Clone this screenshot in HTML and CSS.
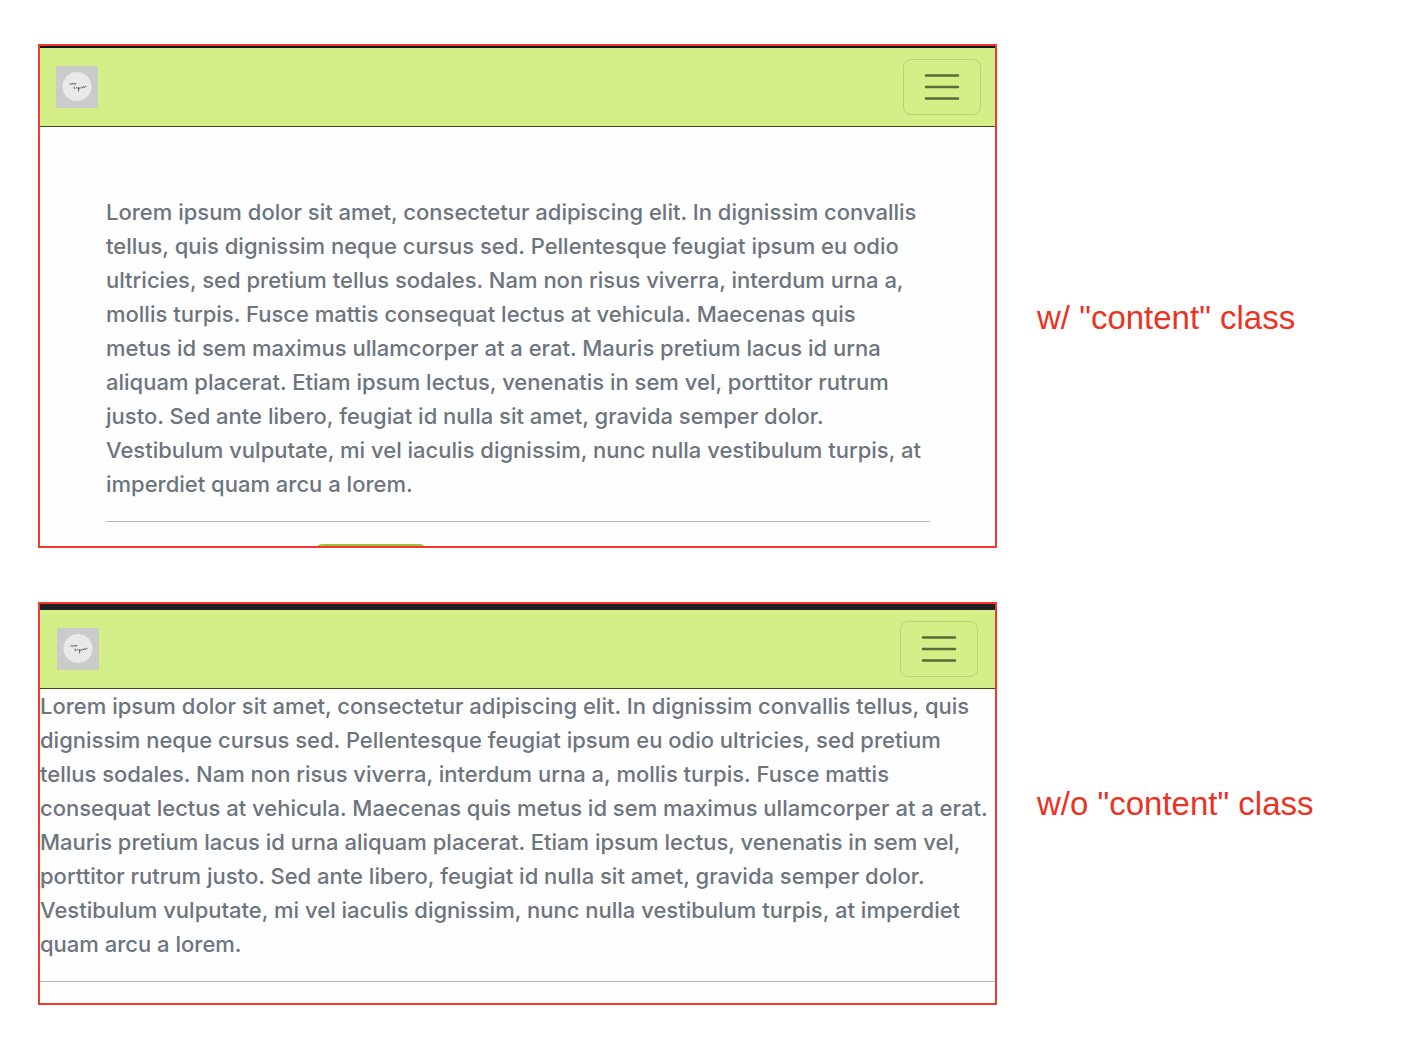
FILE: index.html
```html
<!DOCTYPE html>
<html lang="en">
<head>
  <meta charset="utf-8">
  <meta name="viewport" content="width=device-width, initial-scale=1">
  <title>Content class comparison</title>
  <link rel="stylesheet" href="styles.css">
</head>
<body>
  <main class="comparison">
    <figure class="example">
      <div class="frame frame-clipped">
        <header class="navbar">
          <a class="logo" href="#" aria-label="Home">
            <svg viewBox="0 0 42 42" width="42" height="42" aria-hidden="true">
              <rect width="42" height="42" fill="#cbcbcb"/>
              <circle cx="21" cy="20.5" r="14.5" fill="#e9e9e9"/>
              <path d="M13.5 18.5l1.2-1.2 .6 1.2 1.2-1.2 .6 1 1.2-1.2 .6 1.2 1.5-1M18 20.5l.3 2.2 1-.2M20 22q1.2-1.3 1.4 .2M22.5 21.5q-1.2 1.5 .4 1l.2-1-.7 4M24 22.4l.9-.9 .6 .9M26 20.5l.7 1.3 1-1.2 .6 1.1 1-1.3 1.2-.2" fill="none" stroke="#444" stroke-width=".8"/>
            </svg>
          </a>
          <button class="toggler" type="button" aria-label="Toggle navigation">
            <svg viewBox="0 0 42 42" width="42" height="42" aria-hidden="true">
              <path d="M5 9.5h32M5 21h32M5 32.5h32" stroke="#5c6a38" stroke-width="2.5" stroke-linecap="round"/>
            </svg>
          </button>
        </header>
        <div class="content">
          <p class="copy">Lorem ipsum dolor sit amet, consectetur adipiscing elit. In dignissim convallis tellus, quis dignissim neque cursus sed. Pellentesque feugiat ipsum eu odio ultricies, sed pretium tellus sodales. Nam non risus viverra, interdum urna a, mollis turpis. Fusce mattis consequat lectus at vehicula. Maecenas quis metus id sem maximus ullamcorper at a erat. Mauris pretium lacus id urna aliquam placerat. Etiam ipsum lectus, venenatis in sem vel, porttitor rutrum justo. Sed ante libero, feugiat id nulla sit amet, gravida semper dolor. Vestibulum vulputate, mi vel iaculis dignissim, nunc nulla vestibulum turpis, at imperdiet quam arcu a lorem.</p>
          <hr class="rule">
          <button class="action" type="button" aria-label="Continue"></button>
        </div>
      </div>
      <figcaption class="note note-lowered">w/ "content" class</figcaption>
    </figure>

    <figure class="example">
      <div class="frame">
        <header class="navbar navbar-offset">
          <a class="logo" href="#" aria-label="Home">
            <svg viewBox="0 0 42 42" width="42" height="42" aria-hidden="true">
              <rect width="42" height="42" fill="#cbcbcb"/>
              <circle cx="21" cy="20.5" r="14.5" fill="#e9e9e9"/>
              <path d="M13.5 18.5l1.2-1.2 .6 1.2 1.2-1.2 .6 1 1.2-1.2 .6 1.2 1.5-1M18 20.5l.3 2.2 1-.2M20 22q1.2-1.3 1.4 .2M22.5 21.5q-1.2 1.5 .4 1l.2-1-.7 4M24 22.4l.9-.9 .6 .9M26 20.5l.7 1.3 1-1.2 .6 1.1 1-1.3 1.2-.2" fill="none" stroke="#444" stroke-width=".8"/>
            </svg>
          </a>
          <button class="toggler" type="button" aria-label="Toggle navigation">
            <svg viewBox="0 0 42 42" width="42" height="42" aria-hidden="true">
              <path d="M5 9.5h32M5 21h32M5 32.5h32" stroke="#5c6a38" stroke-width="2.5" stroke-linecap="round"/>
            </svg>
          </button>
        </header>
        <div class="plain">
          <p class="copy">Lorem ipsum dolor sit amet, consectetur adipiscing elit. In dignissim convallis tellus, quis dignissim neque cursus sed. Pellentesque feugiat ipsum eu odio ultricies, sed pretium tellus sodales. Nam non risus viverra, interdum urna a, mollis turpis. Fusce mattis consequat lectus at vehicula. Maecenas quis metus id sem maximus ullamcorper at a erat. Mauris pretium lacus id urna aliquam placerat. Etiam ipsum lectus, venenatis in sem vel, porttitor rutrum justo. Sed ante libero, feugiat id nulla sit amet, gravida semper dolor. Vestibulum vulputate, mi vel iaculis dignissim, nunc nulla vestibulum turpis, at imperdiet quam arcu a lorem.</p>
          <hr class="rule">
        </div>
      </div>
      <figcaption class="note">w/o "content" class</figcaption>
    </figure>
  </main>
</body>
</html>
```

FILE: styles.css
```css
* {
  box-sizing: border-box;
}

body {
  margin: 0;
  background: #fff;
  color: #6c757d;
  font-family: Inter, "Liberation Sans", sans-serif;
  font-size: 22px;
  font-weight: 500;
  line-height: 34px;
}

.comparison {
  display: grid;
  gap: 54px;
  padding: 44px 38px;
}

.example {
  display: grid;
  grid-template-columns: minmax(0, 1fr) 337px;
  column-gap: 40px;
  align-items: center;
  margin: 0;
}

.frame {
  border: 2px solid #ee3b2e;
  background: #fefefe;
}

/* Cuts the page off just below the top of its button */
.frame-clipped {
  height: 504px;
  overflow: hidden;
}

.navbar {
  display: flex;
  align-items: center;
  justify-content: space-between;
  padding: 11px 14px 11px 16px;
  border-top: 2px solid #14171a;
  border-bottom: 1px solid #3f4a1c;
  background: #d5ef88;
}

.navbar-offset {
  padding: 11px 17px;
  border-top-width: 6px;
  border-top-color: #202124;
}

.logo,
.logo svg,
.toggler svg {
  display: block;
}

.toggler {
  display: flex;
  align-items: center;
  justify-content: center;
  width: 78px;
  height: 56px;
  padding: 0;
  border: 1px solid #bad177;
  border-radius: 8px;
  background: transparent;
}

.content {
  padding: 68px 65px 68px 66px;
}

.plain {
  padding-bottom: 21px;
}

.copy {
  margin: 0;
}

.content .copy {
  padding-right: 6px;
}

.rule {
  height: 1px;
  margin: 20px 0 22px;
  border: 0;
  background: #b4b6b8;
}

.plain .rule {
  margin-bottom: 0;
}

.action {
  display: block;
  width: 110px;
  height: 54px;
  margin-left: 210px;
  padding: 0;
  border: 0;
  border-radius: 6px;
  background: #a0c238;
}

.note {
  color: #ea3323;
  font-family: "Liberation Sans", sans-serif;
  font-size: 33px;
  font-weight: 400;
  line-height: 38px;
}

.note-lowered {
  padding-top: 44px;
}
```
